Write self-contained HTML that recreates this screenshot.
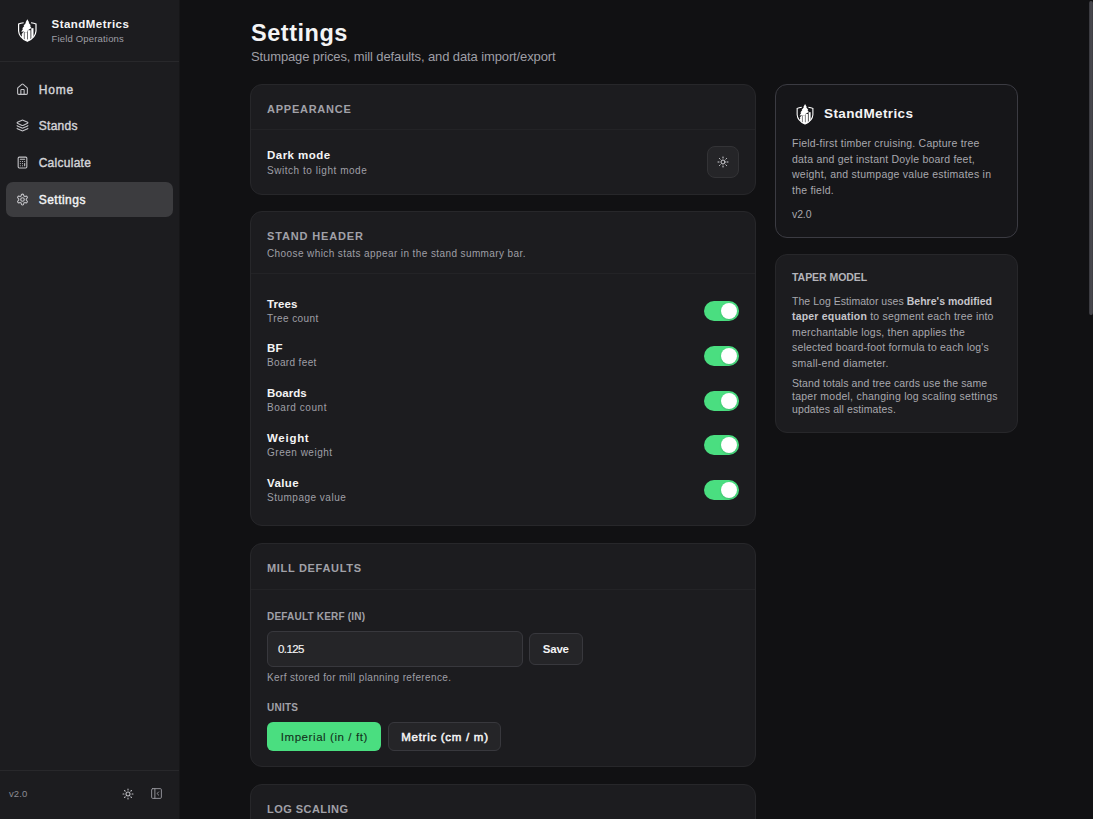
<!DOCTYPE html>
<html><head><meta charset="utf-8"><title>StandMetrics Settings</title>
<style>
html,body{margin:0;padding:0;width:1093px;height:819px;overflow:hidden;background:#111113;}
body{position:relative;font-family:"Liberation Sans",sans-serif;}
.t{position:absolute;white-space:nowrap;line-height:1;}
b{font-weight:700;}
</style></head><body>
<div style="position:absolute;left:0px;top:0px;width:179px;height:819px;background:#1c1c1f;border-radius:0px;"></div>
<div style="position:absolute;left:179px;top:0px;width:1px;height:819px;background:#161618;border-radius:0px;"></div>
<div style="position:absolute;left:0px;top:61px;width:179px;height:1px;background:#28282b;border-radius:0px;"></div>
<div style="position:absolute;left:0px;top:770px;width:179px;height:1px;background:#28282b;border-radius:0px;"></div>
<svg style="position:absolute;left:14px;top:17px" width="26" height="27" viewBox="0 0 26 27"><defs><clipPath id="ca"><path d="M4.6 7 Q8 5.6 13.3 5.4 Q18.6 5.6 22 7 L22 14 Q21.6 20.8 13.3 24.3 Q5 20.8 4.6 14 Z"/></clipPath></defs><g clip-path="url(#ca)"><path d="M9.9 14.6 L8.9 15.4 L7.4 17.6 L8.2 17.7 L7.2 19.8 L9.9 23 Z" fill="#fff"/><rect x="10.5" y="15.2" width="2.7" height="12" fill="#fff"/><rect x="13.8" y="13.2" width="2.7" height="12" fill="#fff"/><rect x="17.3" y="11.2" width="2.2" height="12" fill="#fff"/><rect x="4" y="22.4" width="20" height="4" fill="#fff"/></g><path d="M9.7 5.75 Q6.6 6.1 4.6 7 L4.6 14 Q5 20.8 13.3 24.3 Q21.6 20.8 22 14 L22 7 Q20 6.1 17 5.75" fill="none" stroke="#fff" stroke-width="1.2"/><path d="M13.35 2.2 L15.2 5.6 L14.6 5.7 L16.9 8.6 L16.0 8.8 L17.4 11.0 L13.8 13.2 L13.2 15.2 L10.5 15.2 L9.9 14.6 L7.2 14.8 L9.1 11.8 L8.1 11.6 L10.3 8.9 L9.5 8.7 L12.0 5.8 L11.5 5.6 Z" fill="#fff"/></svg>
<div style="position:absolute;left:6px;top:182.2px;width:167px;height:35.3px;background:#3c3c3f;border-radius:7px;"></div>
<svg style="position:absolute;left:15.5px;top:83.0px" width="13" height="13" viewBox="0 0 24 24" fill="none" stroke="#c4c4c8" stroke-width="2" stroke-linecap="round" stroke-linejoin="round"><path d="M15 21v-8a1 1 0 0 0-1-1h-4a1 1 0 0 0-1 1v8"/><path d="M3 10a2 2 0 0 1 .709-1.528l7-5.999a2 2 0 0 1 2.582 0l7 5.999A2 2 0 0 1 21 10v9a2 2 0 0 1-2 2H5a2 2 0 0 1-2-2z"/></svg>
<svg style="position:absolute;left:15.5px;top:118.8px" width="13" height="13" viewBox="0 0 24 24" fill="none" stroke="#c4c4c8" stroke-width="2" stroke-linecap="round" stroke-linejoin="round"><path d="M12.83 2.18a2 2 0 0 0-1.66 0L2.6 6.08a1 1 0 0 0 0 1.83l8.58 3.91a2 2 0 0 0 1.66 0l8.58-3.9a1 1 0 0 0 0-1.83z"/><path d="M2 12a1 1 0 0 0 .58.91l8.6 3.91a2 2 0 0 0 1.65 0l8.58-3.9A1 1 0 0 0 22 12"/><path d="M2 17a1 1 0 0 0 .58.91l8.6 3.91a2 2 0 0 0 1.65 0l8.58-3.9A1 1 0 0 0 22 17"/></svg>
<svg style="position:absolute;left:15.5px;top:155.7px" width="13" height="13" viewBox="0 0 24 24" fill="none" stroke="#c4c4c8" stroke-width="2" stroke-linecap="round" stroke-linejoin="round"><rect width="16" height="20" x="4" y="2" rx="2"/><line x1="8" x2="16" y1="6" y2="6"/><line x1="16" x2="16" y1="14" y2="18"/><path d="M16 10h.01"/><path d="M12 10h.01"/><path d="M8 10h.01"/><path d="M12 14h.01"/><path d="M8 14h.01"/><path d="M12 18h.01"/><path d="M8 18h.01"/></svg>
<svg style="position:absolute;left:15.5px;top:193.1px" width="13" height="13" viewBox="0 0 24 24" fill="none" stroke="#c4c4c8" stroke-width="2" stroke-linecap="round" stroke-linejoin="round"><path d="M12.22 2h-.44a2 2 0 0 0-2 2v.18a2 2 0 0 1-1 1.73l-.43.25a2 2 0 0 1-2 0l-.15-.08a2 2 0 0 0-2.73.73l-.22.38a2 2 0 0 0 .73 2.73l.15.1a2 2 0 0 1 1 1.72v.51a2 2 0 0 1-1 1.74l-.15.09a2 2 0 0 0-.73 2.73l.22.38a2 2 0 0 0 2.73.73l.15-.08a2 2 0 0 1 2 0l.43.25a2 2 0 0 1 1 1.73V20a2 2 0 0 0 2 2h.44a2 2 0 0 0 2-2v-.18a2 2 0 0 1 1-1.730l.43-.25a2 2 0 0 1 2 0l.15.08a2 2 0 0 0 2.73-.73l.22-.39a2 2 0 0 0-.73-2.73l-.15-.08a2 2 0 0 1-1-1.74v-.5a2 2 0 0 1 1-1.74l.15-.09a2 2 0 0 0 .73-2.73l-.22-.38a2 2 0 0 0-2.73-.73l-.15.08a2 2 0 0 1-2 0l-.43-.25a2 2 0 0 1-1-1.73V4a2 2 0 0 0-2-2z"/><circle cx="12" cy="12" r="3.3"/></svg>
<svg style="position:absolute;left:122px;top:787.6px" width="12" height="12" viewBox="0 0 24 24" fill="none" stroke="#bdbdc2" stroke-width="2.1" stroke-linecap="round" stroke-linejoin="round"><circle cx="12" cy="12" r="4"/><path d="M12 2v2"/><path d="M12 20v2"/><path d="m4.93 4.930 1.41 1.41"/><path d="m17.66 17.66 1.41 1.41"/><path d="M2 12h2"/><path d="M20 12h2"/><path d="m6.34 17.66-1.41 1.41"/><path d="m19.07 4.93-1.41 1.41"/></svg>
<svg style="position:absolute;left:150.25px;top:787.1px" width="13" height="13" viewBox="0 0 24 24" fill="none" stroke="#9a9aa0" stroke-width="1.7" stroke-linecap="round" stroke-linejoin="round"><rect width="18" height="18" x="3" y="3" rx="2"/><path d="M9 3v18"/><path d="m16 15-3-3 3-3"/></svg>
<div style="position:absolute;left:250px;top:84px;width:506px;height:111px;background:#1c1c1f;border-radius:12px;border:1px solid #27272a;box-sizing:border-box;"></div>
<div style="position:absolute;left:251px;top:129px;width:504px;height:1px;background:#232326;border-radius:0px;"></div>
<div style="position:absolute;left:707px;top:146px;width:32px;height:32px;background:#252528;border-radius:8px;border:1px solid #333336;box-sizing:border-box;"></div>
<svg style="position:absolute;left:717px;top:156.3px" width="12" height="12" viewBox="0 0 24 24" fill="none" stroke="#d4d4d8" stroke-width="2" stroke-linecap="round" stroke-linejoin="round"><circle cx="12" cy="12" r="4"/><path d="M12 2v2"/><path d="M12 20v2"/><path d="m4.93 4.930 1.41 1.41"/><path d="m17.66 17.66 1.41 1.41"/><path d="M2 12h2"/><path d="M20 12h2"/><path d="m6.34 17.66-1.41 1.41"/><path d="m19.07 4.93-1.41 1.41"/></svg>
<div style="position:absolute;left:250px;top:211px;width:506px;height:315px;background:#1c1c1f;border-radius:12px;border:1px solid #27272a;box-sizing:border-box;"></div>
<div style="position:absolute;left:251px;top:273px;width:504px;height:1px;background:#232326;border-radius:0px;"></div>
<div style="position:absolute;left:704px;top:300.8px;width:35px;height:20px;background:#4ade80;border-radius:10px;"></div>
<div style="position:absolute;left:720.9px;top:302.8px;width:16px;height:16px;background:#ffffff;border-radius:8px;box-shadow:0 1px 2px rgba(0,0,0,.15);"></div>
<div style="position:absolute;left:704px;top:345.7px;width:35px;height:20px;background:#4ade80;border-radius:10px;"></div>
<div style="position:absolute;left:720.9px;top:347.7px;width:16px;height:16px;background:#ffffff;border-radius:8px;box-shadow:0 1px 2px rgba(0,0,0,.15);"></div>
<div style="position:absolute;left:704px;top:390.5px;width:35px;height:20px;background:#4ade80;border-radius:10px;"></div>
<div style="position:absolute;left:720.9px;top:392.5px;width:16px;height:16px;background:#ffffff;border-radius:8px;box-shadow:0 1px 2px rgba(0,0,0,.15);"></div>
<div style="position:absolute;left:704px;top:435.4px;width:35px;height:20px;background:#4ade80;border-radius:10px;"></div>
<div style="position:absolute;left:720.9px;top:437.4px;width:16px;height:16px;background:#ffffff;border-radius:8px;box-shadow:0 1px 2px rgba(0,0,0,.15);"></div>
<div style="position:absolute;left:704px;top:480.2px;width:35px;height:20px;background:#4ade80;border-radius:10px;"></div>
<div style="position:absolute;left:720.9px;top:482.2px;width:16px;height:16px;background:#ffffff;border-radius:8px;box-shadow:0 1px 2px rgba(0,0,0,.15);"></div>
<div style="position:absolute;left:250px;top:543px;width:506px;height:224px;background:#1c1c1f;border-radius:12px;border:1px solid #27272a;box-sizing:border-box;"></div>
<div style="position:absolute;left:251px;top:588.5px;width:504px;height:1px;background:#232326;border-radius:0px;"></div>
<div style="position:absolute;left:267px;top:631px;width:256px;height:35.5px;background:#252528;border-radius:6px;border:1px solid #38383d;box-sizing:border-box;"></div>
<div style="position:absolute;left:529px;top:633px;width:54px;height:32px;background:#252528;border-radius:6px;border:1px solid #38383d;box-sizing:border-box;"></div>
<div style="position:absolute;left:267px;top:722px;width:114px;height:29px;background:#4ade80;border-radius:6px;"></div>
<div style="position:absolute;left:388px;top:722px;width:113px;height:29px;background:#252528;border-radius:6px;border:1px solid #38383d;box-sizing:border-box;"></div>
<div style="position:absolute;left:250px;top:784px;width:506px;height:100px;background:#1c1c1f;border-radius:12px;border:1px solid #27272a;box-sizing:border-box;"></div>
<div style="position:absolute;left:775px;top:84px;width:243px;height:153.5px;background:#161619;border-radius:12px;border:1px solid #3b3b42;box-sizing:border-box;"></div>
<svg style="position:absolute;left:793px;top:101.7px" width="23.5" height="24.5" viewBox="0 0 26 27"><defs><clipPath id="cb"><path d="M4.6 7 Q8 5.6 13.3 5.4 Q18.6 5.6 22 7 L22 14 Q21.6 20.8 13.3 24.3 Q5 20.8 4.6 14 Z"/></clipPath></defs><g clip-path="url(#cb)"><path d="M9.9 14.6 L8.9 15.4 L7.4 17.6 L8.2 17.7 L7.2 19.8 L9.9 23 Z" fill="#fff"/><rect x="10.5" y="15.2" width="2.7" height="12" fill="#fff"/><rect x="13.8" y="13.2" width="2.7" height="12" fill="#fff"/><rect x="17.3" y="11.2" width="2.2" height="12" fill="#fff"/><rect x="4" y="22.4" width="20" height="4" fill="#fff"/></g><path d="M9.7 5.75 Q6.6 6.1 4.6 7 L4.6 14 Q5 20.8 13.3 24.3 Q21.6 20.8 22 14 L22 7 Q20 6.1 17 5.75" fill="none" stroke="#fff" stroke-width="1.2"/><path d="M13.35 2.2 L15.2 5.6 L14.6 5.7 L16.9 8.6 L16.0 8.8 L17.4 11.0 L13.8 13.2 L13.2 15.2 L10.5 15.2 L9.9 14.6 L7.2 14.8 L9.1 11.8 L8.1 11.6 L10.3 8.9 L9.5 8.7 L12.0 5.8 L11.5 5.6 Z" fill="#fff"/></svg>
<div style="position:absolute;left:775px;top:254px;width:243px;height:178.5px;background:#1c1c1f;border-radius:12px;border:1px solid #27272a;box-sizing:border-box;"></div>
<div style="position:absolute;left:1089px;top:0.5px;width:4px;height:314px;background:linear-gradient(90deg,#36363b,#4a4a50 50%,#3c3c41);border-radius:2px;"></div>
<div class="t" id="t0" style="left:51.5px;top:18.87px;font-size:11.5px;font-weight:700;color:#f4f4f5;letter-spacing:0.462px;">StandMetrics</div>
<div class="t" id="t1" style="left:51.5px;top:34.06px;font-size:9.5px;font-weight:400;color:#9f9fa6;letter-spacing:0.173px;">Field Operations</div>
<div class="t" id="t2" style="left:38.7px;top:84.24px;font-size:12px;font-weight:400;color:#d4d4d8;letter-spacing:0.828px;-webkit-text-stroke-width:0.4px;">Home</div>
<div class="t" id="t3" style="left:38.7px;top:120.04px;font-size:12px;font-weight:400;color:#d4d4d8;letter-spacing:0.306px;-webkit-text-stroke-width:0.4px;">Stands</div>
<div class="t" id="t4" style="left:38.7px;top:156.94px;font-size:12px;font-weight:400;color:#d4d4d8;letter-spacing:0.271px;-webkit-text-stroke-width:0.4px;">Calculate</div>
<div class="t" id="t5" style="left:38.7px;top:194.34px;font-size:12px;font-weight:400;color:#f4f4f5;letter-spacing:0.477px;-webkit-text-stroke-width:0.4px;">Settings</div>
<div class="t" id="t6" style="left:9px;top:788.96px;font-size:9.5px;font-weight:400;color:#8b8b92;letter-spacing:0.081px;">v2.0</div>
<div class="t" id="t7" style="left:251px;top:22.11px;font-size:23.5px;font-weight:700;color:#f4f4f5;letter-spacing:0.528px;">Settings</div>
<div class="t" id="t8" style="left:251px;top:50.3px;font-size:13px;font-weight:400;color:#9f9fa6;letter-spacing:-0.114px;">Stumpage prices, mill defaults, and data import/export</div>
<div class="t" id="t9" style="left:267px;top:103.89px;font-size:11px;font-weight:700;color:#a1a1a8;letter-spacing:0.754px;">APPEARANCE</div>
<div class="t" id="t10" style="left:267px;top:150.07px;font-size:11.5px;font-weight:700;color:#f4f4f5;letter-spacing:0.47px;">Dark mode</div>
<div class="t" id="t11" style="left:267px;top:165.53px;font-size:10px;font-weight:400;color:#9f9fa6;letter-spacing:0.542px;">Switch to light mode</div>
<div class="t" id="t12" style="left:267px;top:231.19px;font-size:11px;font-weight:700;color:#a1a1a8;letter-spacing:0.856px;">STAND HEADER</div>
<div class="t" id="t13" style="left:267px;top:248.53px;font-size:10px;font-weight:400;color:#9f9fa6;letter-spacing:0.401px;">Choose which stats appear in the stand summary bar.</div>
<div class="t" id="t14" style="left:267px;top:298.57px;font-size:11.5px;font-weight:700;color:#f4f4f5;letter-spacing:0.059px;">Trees</div>
<div class="t" id="t15" style="left:267px;top:313.64px;font-size:10px;font-weight:400;color:#9f9fa6;letter-spacing:0.44px;">Tree count</div>
<div class="t" id="t16" style="left:267px;top:343.32px;font-size:11.5px;font-weight:700;color:#f4f4f5;letter-spacing:0.156px;">BF</div>
<div class="t" id="t17" style="left:267px;top:358.39px;font-size:10px;font-weight:400;color:#9f9fa6;letter-spacing:0.36px;">Board feet</div>
<div class="t" id="t18" style="left:267px;top:388.07px;font-size:11.5px;font-weight:700;color:#f4f4f5;letter-spacing:0.014px;">Boards</div>
<div class="t" id="t19" style="left:267px;top:403.14px;font-size:10px;font-weight:400;color:#9f9fa6;letter-spacing:0.556px;">Board count</div>
<div class="t" id="t20" style="left:267px;top:432.82px;font-size:11.5px;font-weight:700;color:#f4f4f5;letter-spacing:0.717px;">Weight</div>
<div class="t" id="t21" style="left:267px;top:447.89px;font-size:10px;font-weight:400;color:#9f9fa6;letter-spacing:0.511px;">Green weight</div>
<div class="t" id="t22" style="left:267px;top:477.57px;font-size:11.5px;font-weight:700;color:#f4f4f5;letter-spacing:0.41px;">Value</div>
<div class="t" id="t23" style="left:267px;top:492.64px;font-size:10px;font-weight:400;color:#9f9fa6;letter-spacing:0.501px;">Stumpage value</div>
<div class="t" id="t24" style="left:267px;top:563.09px;font-size:11px;font-weight:700;color:#a1a1a8;letter-spacing:0.686px;">MILL DEFAULTS</div>
<div class="t" id="t25" style="left:267px;top:611.53px;font-size:10px;font-weight:700;color:#a1a1a8;letter-spacing:0.199px;">DEFAULT KERF (IN)</div>
<div class="t" id="t26" style="left:278px;top:643.87px;font-size:11.5px;font-weight:400;color:#f4f4f5;letter-spacing:-0.57px;-webkit-text-stroke-width:0.15px;">0.125</div>
<div class="t" id="t27" style="left:542.8px;top:643.87px;font-size:11.5px;font-weight:700;color:#f4f4f5;letter-spacing:-0.221px;">Save</div>
<div class="t" id="t28" style="left:267px;top:672.83px;font-size:10px;font-weight:400;color:#9f9fa6;letter-spacing:0.371px;">Kerf stored for mill planning reference.</div>
<div class="t" id="t29" style="left:267px;top:702.93px;font-size:10px;font-weight:700;color:#a1a1a8;letter-spacing:0.25px;">UNITS</div>
<div class="t" id="t30" style="left:280.7px;top:731.87px;font-size:11.5px;font-weight:400;color:#14301c;letter-spacing:0.583px;-webkit-text-stroke-width:0.1px;">Imperial (in / ft)</div>
<div class="t" id="t31" style="left:401.3px;top:731.87px;font-size:11.5px;font-weight:400;color:#f4f4f5;letter-spacing:0.717px;-webkit-text-stroke-width:0.5px;">Metric (cm / m)</div>
<div class="t" id="t32" style="left:267px;top:803.89px;font-size:11px;font-weight:700;color:#a1a1a8;letter-spacing:0.461px;">LOG SCALING</div>
<div class="t" id="t33" style="left:824px;top:106.67px;font-size:13.5px;font-weight:700;color:#f4f4f5;letter-spacing:0.384px;">StandMetrics</div>
<div class="t" id="t34" style="left:792px;top:138.21px;font-size:10.5px;font-weight:400;color:#a8a8ae;letter-spacing:0.221px;">Field-first timber cruising. Capture tree</div>
<div class="t" id="t35" style="left:792px;top:153.76px;font-size:10.5px;font-weight:400;color:#a8a8ae;letter-spacing:0.205px;">data and get instant Doyle board feet,</div>
<div class="t" id="t36" style="left:792px;top:169.31px;font-size:10.5px;font-weight:400;color:#a8a8ae;letter-spacing:0.245px;">weight, and stumpage value estimates in</div>
<div class="t" id="t37" style="left:792px;top:184.86px;font-size:10.5px;font-weight:400;color:#a8a8ae;letter-spacing:0.222px;">the field.</div>
<div class="t" id="t38" style="left:792px;top:209.01px;font-size:10.5px;font-weight:400;color:#a8a8ae;letter-spacing:-0.116px;">v2.0</div>
<div class="t" id="t39" style="left:792px;top:271.81px;font-size:10.5px;font-weight:700;color:#b4b4ba;letter-spacing:-0.044px;">TAPER MODEL</div>
<div class="t" id="t40" style="left:792px;top:295.61px;font-size:10.5px;font-weight:400;color:#a8a8ae;letter-spacing:0.037px;">The Log Estimator uses <b style="color:#c6c6cb">Behre's modified</b></div>
<div class="t" id="t41" style="left:792px;top:311.11px;font-size:10.5px;font-weight:400;color:#a8a8ae;letter-spacing:0.196px;"><b style="color:#c6c6cb">taper equation</b> to segment each tree into</div>
<div class="t" id="t42" style="left:792px;top:326.61px;font-size:10.5px;font-weight:400;color:#a8a8ae;letter-spacing:0.209px;">merchantable logs, then applies the</div>
<div class="t" id="t43" style="left:792px;top:342.11px;font-size:10.5px;font-weight:400;color:#a8a8ae;letter-spacing:0.183px;">selected board-foot formula to each log's</div>
<div class="t" id="t44" style="left:792px;top:357.61px;font-size:10.5px;font-weight:400;color:#a8a8ae;letter-spacing:0.265px;">small-end diameter.</div>
<div class="t" id="t45" style="left:792px;top:378.21px;font-size:10.5px;font-weight:400;color:#a8a8ae;letter-spacing:0.096px;">Stand totals and tree cards use the same</div>
<div class="t" id="t46" style="left:792px;top:391.31px;font-size:10.5px;font-weight:400;color:#a8a8ae;letter-spacing:0.243px;">taper model, changing log scaling settings</div>
<div class="t" id="t47" style="left:792px;top:404.41px;font-size:10.5px;font-weight:400;color:#a8a8ae;letter-spacing:0.107px;">updates all estimates.</div>
</body></html>
